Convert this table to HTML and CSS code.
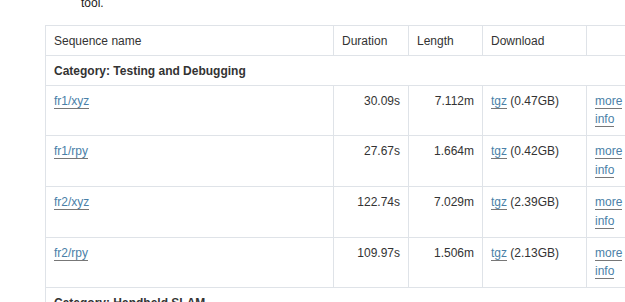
FILE: index.html
```html
<!DOCTYPE html>
<html>
<head>
<meta charset="utf-8">
<link rel="stylesheet" href="styles.css">
</head>
<body>
<p class="intro">tool.</p>
<table class="seq">
  <colgroup>
    <col class="c-name"><col class="c-dur"><col class="c-len"><col class="c-dl"><col class="c-more">
  </colgroup>
  <thead>
    <tr><th>Sequence name</th><th>Duration</th><th>Length</th><th>Download</th><th></th></tr>
  </thead>
  <tbody>
    <tr class="cat"><td colspan="5">Category: Testing and Debugging</td></tr>
    <tr><td><a href="#">fr1/xyz</a></td><td class="num">30.09s</td><td class="num">7.112m</td><td><a href="#">tgz</a> (0.47GB)</td><td><a href="#">more info</a></td></tr>
    <tr><td><a href="#">fr1/rpy</a></td><td class="num">27.67s</td><td class="num">1.664m</td><td><a href="#">tgz</a> (0.42GB)</td><td><a href="#">more info</a></td></tr>
    <tr><td><a href="#">fr2/xyz</a></td><td class="num">122.74s</td><td class="num">7.029m</td><td><a href="#">tgz</a> (2.39GB)</td><td><a href="#">more info</a></td></tr>
    <tr><td><a href="#">fr2/rpy</a></td><td class="num">109.97s</td><td class="num">1.506m</td><td><a href="#">tgz</a> (2.13GB)</td><td><a href="#">more info</a></td></tr>
    <tr class="cat"><td colspan="5">Category: Handheld SLAM</td></tr>
  </tbody>
</table>
</body>
</html>
```
FILE: styles.css
```css
html, body {
  margin: 0;
  padding: 0;
  overflow: hidden;
  background: #fff;
}
body {
  font-family: "Liberation Sans", Arial, sans-serif;
  font-size: 12px;
  line-height: 18.85px;
  color: #333;
}
.intro {
  margin: -6px 0 0 0;
  padding-left: 81px;
  color: #1a1a1a;
}
.seq {
  margin: 12px 0 0 45px;
  border-collapse: collapse;
  table-layout: fixed;
  width: 602px;
}
.c-name { width: 288px; }
.c-dur { width: 75px; }
.c-len { width: 74px; }
.c-dl { width: 104px; }
.c-more { width: 61px; }
.seq th, .seq td {
  border: 1px solid #dfe3e8;
  text-align: left;
  vertical-align: top;
}
.seq th {
  font-weight: normal;
  padding: 6px 8px 4px;
}
.seq td {
  padding: 6px 8px;
}
.seq tr.cat td {
  font-weight: bold;
  padding: 6px 8px 4px;
}
.seq td.num {
  text-align: right;
}
.seq a {
  color: #4a7fa8;
  text-decoration: none;
  border-bottom: 1px solid #777;
}
```
